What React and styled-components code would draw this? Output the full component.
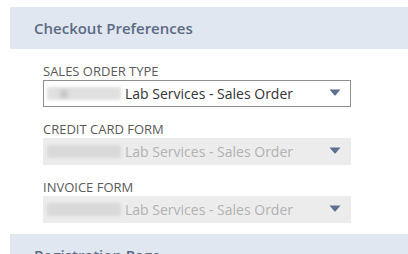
import React from "react";
import styled, { createGlobalStyle } from "styled-components";

const GlobalStyle = createGlobalStyle`
  body {
    margin: 0;
    background: #ffffff;
    font-family: "Open Sans", "Noto Sans", sans-serif;
  }
`;

const fields = [
  { label: "SALES ORDER TYPE", value: "Lab Services - Sales Order", disabled: false },
  { label: "CREDIT CARD FORM", value: "Lab Services - Sales Order", disabled: true },
  { label: "INVOICE FORM", value: "Lab Services - Sales Order", disabled: true },
];

const ArrowIcon = () => (
  <svg width="12" height="7" viewBox="0 0 12 7">
    <path d="M0.5 0.5 H11.5 L6.6 6.2 Q6 6.8 5.4 6.2 Z" fill="#5e7090" />
  </svg>
);

const SelectField = ({ label, value, disabled }) => (
  <FieldGroup>
    <FieldLabel>{label}</FieldLabel>
    <SelectBox disabled={disabled}>
      <Redacted disabled={disabled}>
        {!disabled && <RedactedSpot />}
      </Redacted>
      <SelectValue disabled={disabled}>{value}</SelectValue>
      <ArrowWrap>
        <ArrowIcon />
      </ArrowWrap>
    </SelectBox>
  </FieldGroup>
);

const App = () => {
  return (
    <>
      <GlobalStyle />
      <Page>
        <SectionHeader>Checkout Preferences</SectionHeader>
        <FieldList>
          {fields.map((f) => (
            <SelectField key={f.label} {...f} />
          ))}
        </FieldList>
        <SectionHeader>Registration Page</SectionHeader>
      </Page>
    </>
  );
};

export default App;

const Page = styled.div`
  padding-top: 7px;
  padding-left: 10px;
  height: 254px;
  overflow: hidden;
  box-sizing: border-box;
`;

const SectionHeader = styled.div`
  height: 42px;
  line-height: 42px;
  background: #e1e7f0;
  padding-left: 24px;
  font-size: 15px;
  font-weight: 600;
  color: #5b6b84;
`;

const FieldList = styled.div`
  display: flex;
  flex-direction: column;
  gap: 13px;
  padding: 13px 0 11px 33px;
`;

const FieldGroup = styled.div`
  display: flex;
  flex-direction: column;
`;

const FieldLabel = styled.div`
  font-size: 13px;
  line-height: 18px;
  color: #5a5a5a;
`;

const SelectBox = styled.div`
  width: 308px;
  height: 27px;
  box-sizing: border-box;
  display: flex;
  align-items: center;
  padding: 0 9px 0 3px;
  background: ${({ disabled }) => (disabled ? "#ececec" : "#ffffff")};
  border: 1px solid ${({ disabled }) => (disabled ? "#ececec" : "#8f8f8f")};
`;

const Redacted = styled.div`
  position: relative;
  width: 74px;
  height: 13px;
  margin-right: 4px;
  border-radius: 2px;
  background: ${({ disabled }) => (disabled ? "#d9d9d9" : "#e0e0e0")};
  filter: blur(1.5px);
`;

const RedactedSpot = styled.div`
  position: absolute;
  left: 13px;
  top: 3px;
  width: 8px;
  height: 8px;
  border-radius: 50%;
  background: #c4c4c4;
  filter: blur(1.5px);
`;

const SelectValue = styled.div`
  flex: 1;
  font-size: 14px;
  line-height: 20px;
  color: ${({ disabled }) => (disabled ? "#b2b2b2" : "#333333")};
`;

const ArrowWrap = styled.div`
  display: flex;
  align-items: center;
  margin-top: -3px;
`;
